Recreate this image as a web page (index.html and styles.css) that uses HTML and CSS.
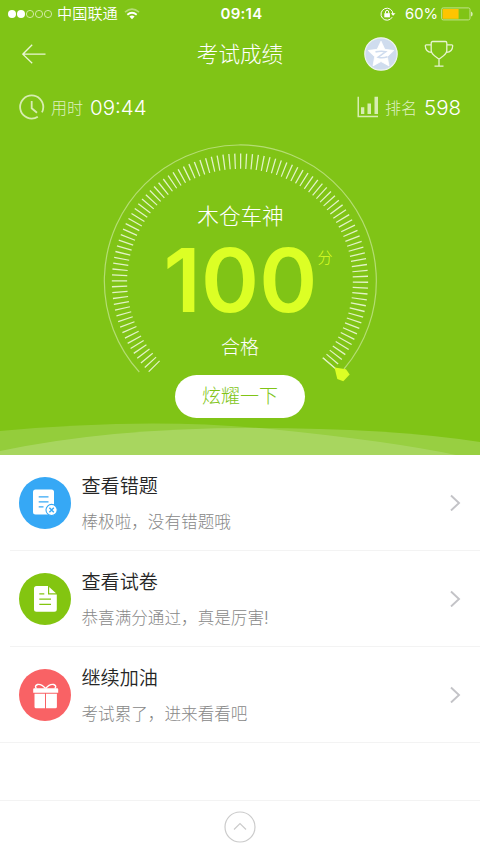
FILE: index.html
```html
<!DOCTYPE html>
<html lang="zh-CN">
<head>
<meta charset="utf-8">
<title>考试成绩</title>
<link rel="stylesheet" href="styles.css">
</head>
<body>
<div class="screen">
  <header class="hero">
    <div class="status">
      <div class="status-left">
        <svg class="signal" width="44" height="10" viewBox="0 0 44 10"><g fill="#fff"><circle cx="4" cy="5" r="4"/><circle cx="13" cy="5" r="4"/></g><g fill="none" stroke="#e4f3c8" stroke-width=".8"><circle cx="22" cy="5" r="3.6"/><circle cx="31" cy="5" r="3.6"/><circle cx="40" cy="5" r="3.6"/></g></svg>
        <span class="carrier">中国联通</span>
        <svg class="wifi" width="16" height="12" viewBox="0 0 16 12" fill="none"><path d="M1 4.2Q8-1.8 15 4.2" stroke="#b5dc77" stroke-width="1.6"/><path d="M3.3 6.8Q8 2.8 12.7 6.8" stroke="#fff" stroke-width="1.8"/><path d="M5.4 8.5Q8 6.6 10.6 8.5L8 11.3Z" fill="#fff"/></svg>
      </div>
      <span class="clock">09:14</span>
      <div class="status-right">
        <svg class="lock" width="16" height="14" viewBox="0 0 16 14" fill="none" stroke="#fff"><path d="M12.2 10.2A6 6 0 1 1 13 7" stroke-width="1"/><path d="M10.8 6.2H15.5L13.1 8.8Z" fill="#fff" stroke="none"/><rect x="4.3" y="6.2" width="5.6" height="4.1" fill="#fff" stroke="none"/><path d="M5.5 6.5V5a1.6 1.6 0 0 1 3.2 0v1.5" stroke-width="1"/></svg>
        <span class="percent">60%</span>
        <svg class="battery" width="32" height="14" viewBox="0 0 32 14"><rect x=".6" y=".9" width="28.4" height="12" rx="1.6" fill="none" stroke="#c1e28c" stroke-width="1"/><rect x="1.6" y="2" width="16" height="9.8" fill="#fec401"/><path d="M30 4.5Q31.7 5 31.7 7T30 9.5Z" fill="#d9eeb6"/></svg>
      </div>
    </div>

    <nav class="nav">
      <svg class="back" width="24" height="20" viewBox="0 0 24 20" fill="none" stroke="#eaf6d5" stroke-width="1.3"><path d="M10.2.8.8 10.2l9.4 9M.8 10.2H23.5"/></svg>
      <h1 class="title">考试成绩</h1>
      <div class="nav-right">
        <svg width="34" height="34" viewBox="0 0 34 34"><circle cx="17" cy="17" r="16.2" fill="#cfdcee" stroke="#edf4ee" stroke-width="1.2"/><path d="M17 4.2l3.8 8.1 9 1.2-6.5 6.2 1.7 9.2-8-4.4-8 4.4 1.7-9.2-6.5-6.2 9-1.2Z" fill="#fff" stroke="#fff" stroke-width=".8" stroke-linejoin="round"/><path d="M11.5 14.9Q17 13.6 21.8 14.7L14.2 20.2Q18.5 21.5 23.5 19.7" fill="none" stroke="#cfdcee" stroke-width="1.6"/></svg>
        <svg width="30" height="28" viewBox="0 0 30 28" fill="none" stroke="#e6f4cf" stroke-width="1.3"><path d="M8.7 1.5H21.5Q22.8 1.5 22.8 3V10.5C22.8 14.5 18.8 16.2 15 19 11.2 16.2 7.2 14.5 7.2 10.5V3Q7.2 1.5 8.7 1.5ZM7.2 4.8H2.3Q1.3 4.8 1.3 5.8C1.4 10 3.5 12.2 7.5 12.4M22.8 4.8H27.7Q28.7 4.8 28.7 5.8C28.6 10 26.5 12.2 22.5 12.4M15 19V26M10.5 26.2H19.5"/></svg>
      </div>
    </nav>

    <div class="stats">
      <div class="stat">
        <svg width="26" height="26" viewBox="0 0 26 26" fill="none" stroke="#d7edb1" stroke-width="1.8"><circle cx="12.7" cy="13" r="11.6" pathLength="360" stroke-dasharray="330 30" stroke-dashoffset="-58"/><path d="M12.7 7V14.3L18 18.8"/></svg>
        <span class="stat-label">用时</span><span class="stat-value">09:44</span>
      </div>
      <div class="stat">
        <svg width="22" height="22" viewBox="0 0 22 22" fill="#d7edb1"><path d="M.5.8H2V19.8H21V21.3H.5ZM4 11.3H7.3V18H4ZM10.5 7.5H14V18H10.5ZM17.5.8H21V18H17.5Z"/></svg>
        <span class="stat-label">排名</span><span class="stat-value">598</span>
      </div>
    </div>

    <section class="dial">
      <svg class="gauge" width="280" height="250" viewBox="100 142 280 250" fill="none">
        <path d="M139.3 372A136 136 0 1 1 344 369" stroke="#b4dd73" stroke-width="1.2"/>
        <path d="M154.6 366.7A120.5 120.5 0 1 1 328.8 363.1" stroke="#e2f3c6" stroke-width="15.3" pathLength="2674" stroke-dasharray="6 20.45"/>
        <path d="M322.7 357.7L336 369" stroke="#e2f3c6" stroke-width="1.3"/>
        <path d="M334.5 367.5L346 369.2 349.7 374.5 343.3 381.3 337.3 379Z" fill="#dcff25"/>
      </svg>
      <div class="name">木仓车神</div>
      <div class="score"><span class="digits">100</span><span class="unit">分</span></div>
      <div class="result">合格</div>
    </section>
    <button class="share">炫耀一下</button>
    <svg class="waves" width="480" height="32" viewBox="0 423 480 32" fill="#fff"><path fill-opacity=".16" d="M0 431Q150 417 270 429T456 455H0Z"/><path fill-opacity=".19" d="M0 451Q110 428 250 428T480 442V455H0Z"/></svg>
  </header>

  <main class="list">
    <a class="row">
      <svg class="icon" width="52" height="52" viewBox="0 0 52 52"><circle cx="26" cy="26" r="26" fill="#36a8f5"/><rect x="14" y="12.5" width="21" height="25" rx="2.5" fill="#fff"/><path d="M19.7 19.8H29.5M19.7 24.8H29.5M19.7 29.8H24.5" stroke="#36a8f5" stroke-width="1.2"/><circle cx="32.6" cy="33" r="5.6" fill="#fff" stroke="#36a8f5" stroke-width="1.1"/><path d="M30.4 30.8l4.4 4.4m0-4.4l-4.4 4.4" stroke="#36a8f5" stroke-width="1.4"/></svg>
      <div class="text"><h2>查看错题</h2><p>棒极啦，没有错题哦</p></div>
      <svg class="chevron" width="11" height="17" viewBox="0 0 11 17" fill="none" stroke="#c3c3c7" stroke-width="1.9"><path d="M1 1.5l8 7.5-8 7.5"/></svg>
    </a>
    <a class="row">
      <svg class="icon" width="52" height="52" viewBox="0 0 52 52"><circle cx="26" cy="26" r="26" fill="#83c510"/><path d="M17.5 13H29V21.5H37.8V36.3Q37.8 38.8 35.3 38.8H17.5Q15 38.8 15 36.3V15.5Q15 13 17.5 13ZM30.2 14L37 20.3H30.2Z" fill="#fff"/><path d="M20.3 20.8H25.3M20.3 26.1H32M20.3 31.4H32" stroke="#83c510" stroke-width="1.3"/></svg>
      <div class="text"><h2>查看试卷</h2><p>恭喜满分通过，真是厉害!</p></div>
      <svg class="chevron" width="11" height="17" viewBox="0 0 11 17" fill="none" stroke="#c3c3c7" stroke-width="1.9"><path d="M1 1.5l8 7.5-8 7.5"/></svg>
    </a>
    <a class="row">
      <svg class="icon" width="52" height="52" viewBox="0 0 52 52"><circle cx="26" cy="26" r="26" fill="#f96265"/><path d="M15.2 19.3H38.2Q39.2 19.3 39.2 20.3V23.8H14.2V20.3Q14.2 19.3 15.2 19.3ZM15.5 24.8H26V39.2H17Q15.5 39.2 15.5 37.7ZM27 24.8H37.9V37.7Q37.9 39.2 36.4 39.2H27Z" fill="#fff"/><path d="M26.6 19.5Q22.5 14.8 18.5 15.5 15 17 17.5 19.5M26.6 19.5Q30.5 14.8 34.7 15.5 38.2 17 35.7 19.5" fill="none" stroke="#fff" stroke-width="1.4"/></svg>
      <div class="text"><h2>继续加油</h2><p>考试累了，进来看看吧</p></div>
      <svg class="chevron" width="11" height="17" viewBox="0 0 11 17" fill="none" stroke="#c3c3c7" stroke-width="1.9"><path d="M1 1.5l8 7.5-8 7.5"/></svg>
    </a>
  </main>

  <footer class="footer">
    <svg width="32" height="32" viewBox="0 0 32 32" fill="none" stroke="#cbcbcb" stroke-width="1.2"><circle cx="16" cy="16" r="15"/><path d="M10 18.5l6-6 6 6"/></svg>
  </footer>
</div>
</body>
</html>
```
FILE: styles.css
```css
* { box-sizing: border-box; }

body {
  margin: 0;
  font-family: Inter, "Noto Sans CJK SC", sans-serif;
  background: #fff;
}

h1, h2, p { margin: 0; font-weight: 300; }
svg { display: block; flex: none; }

.screen {
  width: 480px;
  height: 853px;
  display: flex;
  flex-direction: column;
  overflow: hidden;
}

.hero {
  position: relative;
  height: 455px;
  background: #80c416;
  color: #fff;
  display: flex;
  flex-direction: column;
}

.status, .nav, .stats {
  display: grid;
  grid-template-columns: 1fr auto 1fr;
  align-items: center;
}

.status { height: 27px; padding: 0 7px 0 8px; }
.status-left, .status-right { display: flex; align-items: center; }
.status-right { justify-content: flex-end; }
.carrier { margin-left: 5px; font-size: 15.2px; font-weight: 350; line-height: 26px; }
.wifi { margin-left: 6px; }
.clock { padding-left: 2px; font-size: 15px; font-weight: 600; letter-spacing: .3px; }
.percent { margin: 0 3px 0 8px; font-size: 14.8px; }
.lock { margin-right: 1px; }

.nav { height: 54px; padding: 0 26px 0 22px; }
.title { padding-left: 4px; font-size: 21.6px; line-height: 54px; }
.nav-right { display: flex; justify-content: flex-end; align-items: center; gap: 26px; }

.stats { height: 52px; padding: 0 19px 0 19px; grid-template-columns: auto auto; justify-content: space-between; }
.stat { display: flex; align-items: center; }
.stat-label { margin: 0 7px 0 6px; font-size: 16px; font-weight: 300; color: #dff1c0; }
.stat-value { font-size: 20.5px; font-weight: 350; }

.dial {
  position: relative;
  display: flex;
  flex-direction: column;
  align-items: center;
  height: 242px;
  padding-top: 66px;
}
.gauge { position: absolute; left: 100px; top: 9px; }
.name { padding-left: 1px; font-size: 21.6px; line-height: 34px; font-weight: 300; }
.score { display: flex; padding-left: 16px; color: #dcff25; line-height: 96px; }
.digits { font-size: 88px; font-weight: 620; letter-spacing: .2px; margin-top: -1px; }
.unit { padding-top: 15px; font-size: 15px; line-height: 20px; font-weight: 300; }
.result { font-size: 19px; line-height: 40px; font-weight: 300; }

.share {
  align-self: center;
  width: 130px;
  height: 43px;
  border: 0;
  border-radius: 22px;
  background: #fff;
  color: #80c416;
  font: 300 19px/43px Inter, "Noto Sans CJK SC", sans-serif;
  padding: 0;
}
.waves { margin-top: auto; }

.row {
  display: flex;
  align-items: center;
  height: 96px;
  margin-left: 10px;
  padding: 0 19px 0 9px;
  border-bottom: 1px solid #f3f3f3;
}
.row:last-child { margin-left: 0; padding-left: 19px; }
.text { flex: 1; margin-left: 10.5px; }
.text h2 { font-size: 19.1px; line-height: 30px; font-weight: 350; color: #262626; }
.text p { margin-top: 8px; font-size: 16.6px; line-height: 26px; color: #888; }

.footer {
  margin-top: auto;
  height: 53px;
  border-top: 1px solid #f3f3f3;
  display: flex;
  justify-content: center;
  align-items: center;
}
```
